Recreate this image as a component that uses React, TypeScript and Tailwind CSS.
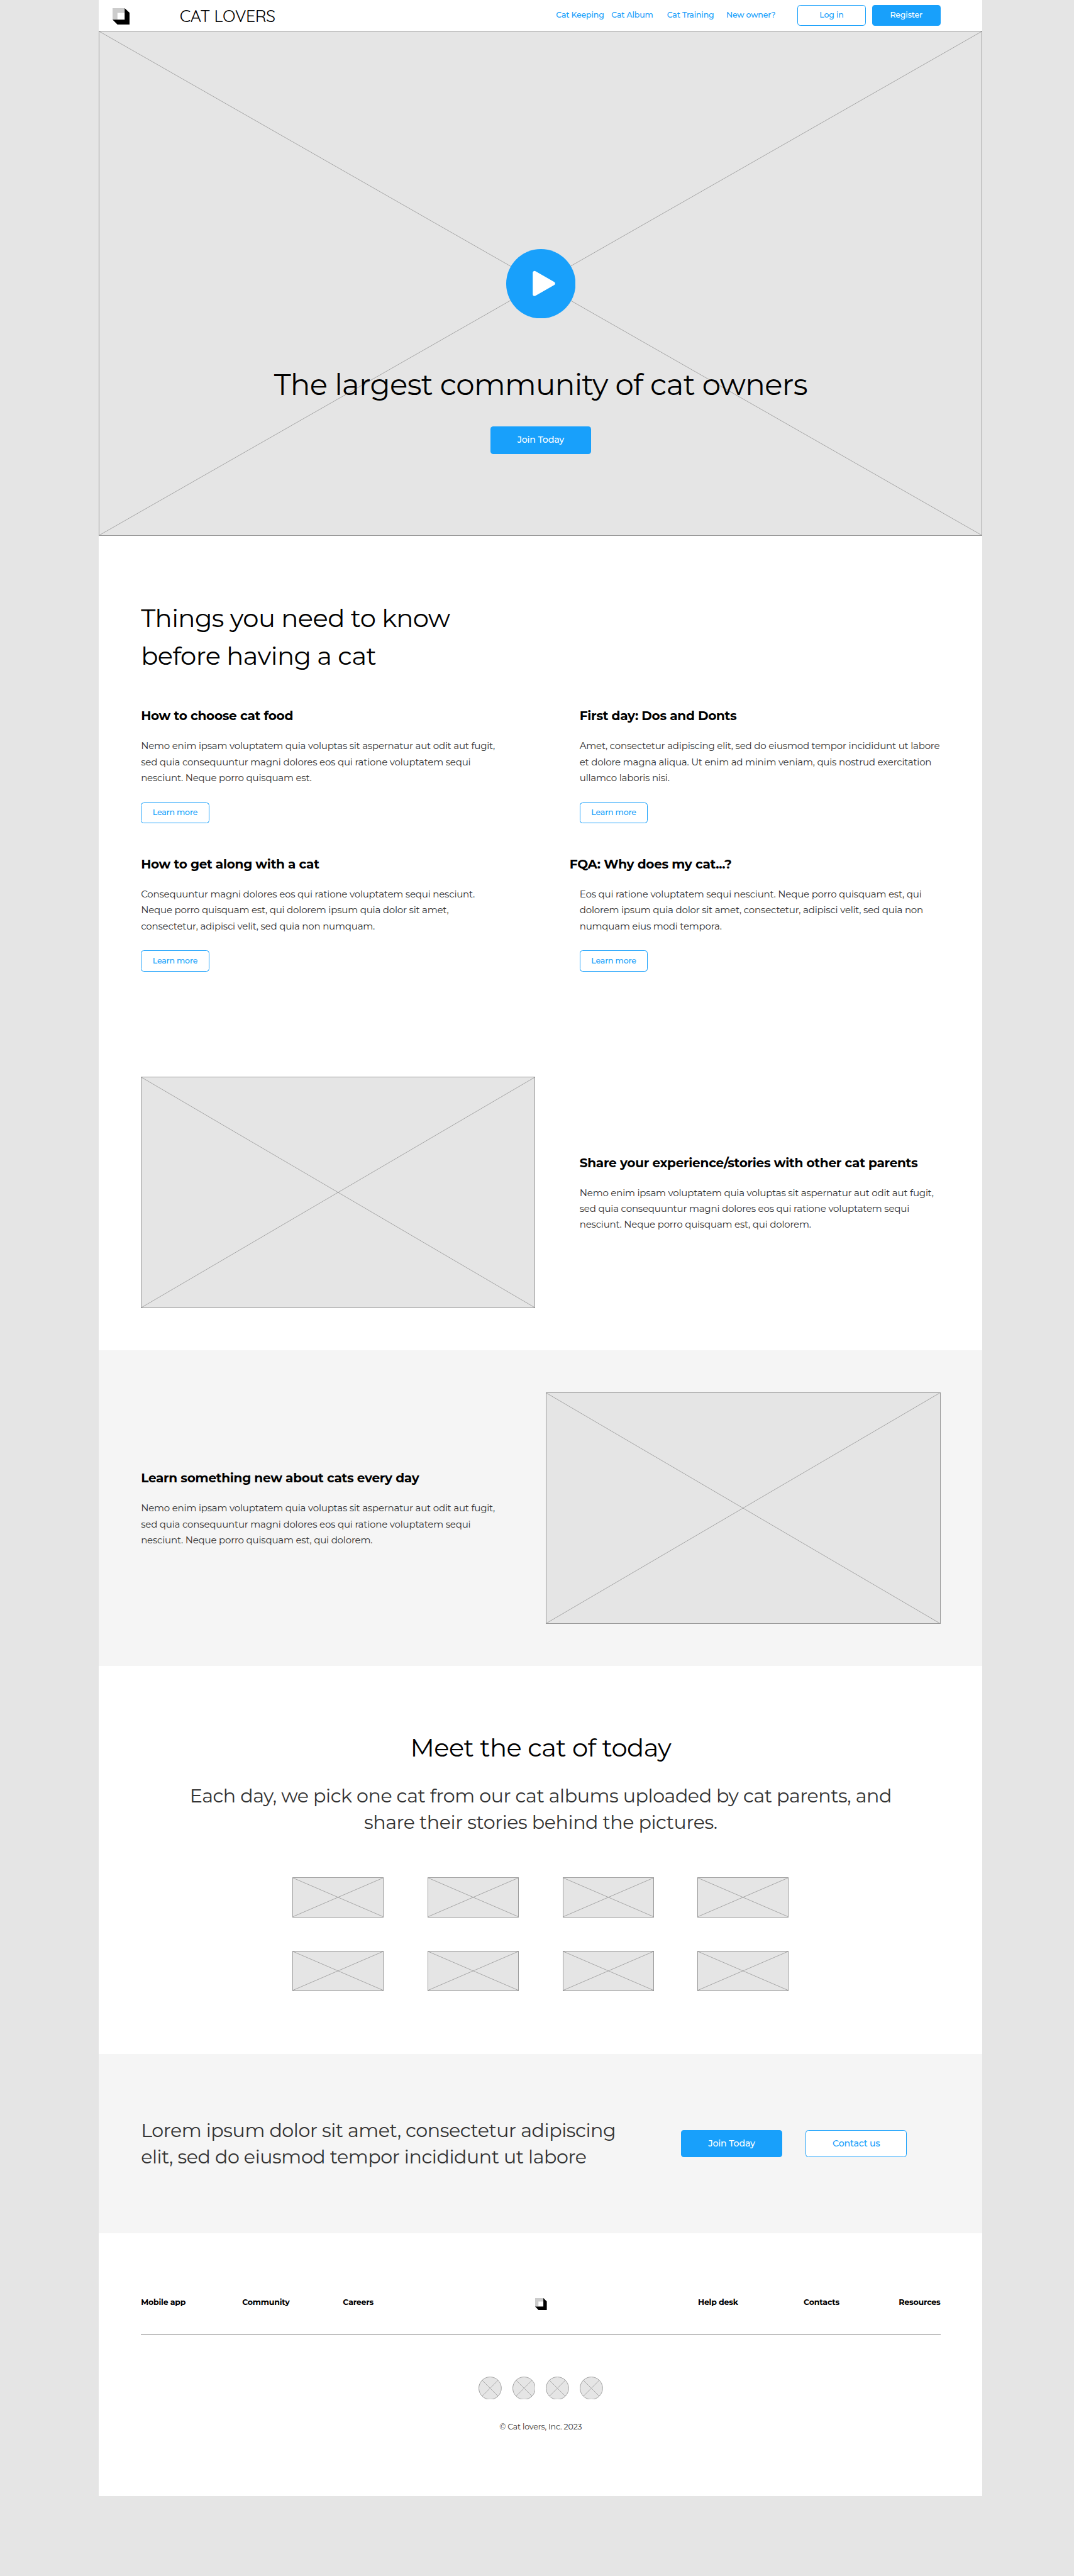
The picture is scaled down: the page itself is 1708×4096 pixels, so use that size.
import type { ReactNode } from "react";

function Logo({ className }: { className: string }) {
  return (
    <svg viewBox="0 0 98 93" preserveAspectRatio="none" className={className} aria-label="Cat Lovers logo">
      <path d="M0 0H69V66H0Z" fill="#cccccc" />
      <path d="M28 27H69V66H28Z" fill="#ffffff" />
      <path d="M69 0L98 27V93H28L0 66H69Z" fill="#000000" />
    </svg>
  );
}

function Cross() {
  return (
    <svg className="absolute inset-0 h-full w-full" preserveAspectRatio="none" aria-hidden="true">
      <line x1="0" y1="0" x2="100%" y2="100%" stroke="#a6a6a6" strokeWidth="1" />
      <line x1="100%" y1="0" x2="0" y2="100%" stroke="#a6a6a6" strokeWidth="1" />
    </svg>
  );
}

function Placeholder({ className }: { className: string }) {
  return (
    <div className={`relative shrink-0 border border-[#999999] bg-[#e5e5e5] ${className}`}>
      <Cross />
    </div>
  );
}

function Button({ filled, className, children }: { filled?: boolean; className: string; children: ReactNode }) {
  const tone = filled ? "bg-[#18a0fb] text-white" : "border border-[#18a0fb] bg-white text-[#18a0fb]";
  return (
    <button
      className={`flex shrink-0 items-center justify-center rounded-[4.5px] font-medium tracking-[-0.0142em] ${tone} ${className}`}
    >
      {children}
    </button>
  );
}

function Lines({ lines }: { lines: string[] }) {
  return (
    <>
      {lines.map((line) => (
        <span key={line} className="block whitespace-nowrap">
          {line}
        </span>
      ))}
    </>
  );
}

function TextBlock({ title, lines, titleClass = "" }: { title: string; lines: string[]; titleClass?: string }) {
  return (
    <>
      <h3
        className={`text-[20.07px] leading-[30.1px] font-bold tracking-[-0.0142em] whitespace-nowrap text-black ${titleClass}`}
      >
        {title}
      </h3>
      <p className="mt-5 text-[15.06px] leading-[25.09px] tracking-[-0.0142em] text-[#333333]">
        <Lines lines={lines} />
      </p>
    </>
  );
}

const articles = [
  {
    title: "How to choose cat food",
    lines: [
      "Nemo enim ipsam voluptatem quia voluptas sit aspernatur aut odit aut fugit,",
      "sed quia consequuntur magni dolores eos qui ratione voluptatem sequi",
      "nesciunt. Neque porro quisquam est.",
    ],
  },
  {
    title: "First day: Dos and Donts",
    lines: [
      "Amet, consectetur adipiscing elit, sed do eiusmod tempor incididunt ut labore",
      "et dolore magna aliqua. Ut enim ad minim veniam, quis nostrud exercitation",
      "ullamco laboris nisi.",
    ],
  },
  {
    title: "How to get along with a cat",
    lines: [
      "Consequuntur magni dolores eos qui ratione voluptatem sequi nesciunt.",
      "Neque porro quisquam est, qui dolorem ipsum quia dolor sit amet,",
      "consectetur, adipisci velit, sed quia non numquam.",
    ],
  },
  {
    title: "FQA: Why does my cat...?",
    titleClass: "-ml-4",
    lines: [
      "Eos qui ratione voluptatem sequi nesciunt. Neque porro quisquam est, qui",
      "dolorem ipsum quia dolor sit amet, consectetur, adipisci velit, sed quia non",
      "numquam eius modi tempora.",
    ],
  },
];

const storyLines = [
  "Nemo enim ipsam voluptatem quia voluptas sit aspernatur aut odit aut fugit,",
  "sed quia consequuntur magni dolores eos qui ratione voluptatem sequi",
  "nesciunt. Neque porro quisquam est, qui dolorem.",
];

export default function App() {
  return (
    <div className="h-[4096px] overflow-hidden bg-[#e5e5e5] pl-[157.25px] font-['Montserrat','Inter',sans-serif]">
      <div className="flex w-[1405.2px] flex-col bg-white">
        <header className="flex h-[49.35px] items-start pr-[66.9px] pl-[21.75px]">
          <Logo className="mt-[13.4px] h-[25.9px] w-[27.3px]" />
          <span className="mt-[5px] ml-[79.5px] font-['Quicksand','Montserrat',sans-serif] text-[26.77px] leading-[40px] tracking-[-0.02em] whitespace-nowrap text-black">
            CAT LOVERS
          </span>
          <nav className="mt-[7.5px] ml-auto flex h-[33.5px] items-center text-[12.55px] font-medium tracking-[-0.0142em] whitespace-nowrap text-[#18a0fb]">
            <a className="w-[88px]">Cat Keeping</a>
            <a className="w-[88.4px]">Cat Album</a>
            <a className="w-[94.2px]">Cat Training</a>
            <a className="w-[113.3px]">New owner?</a>
            <Button className="h-[33.5px] w-[108.7px]">Log in</Button>
            <Button filled className="ml-2.5 h-[33.5px] w-[108.7px]">
              Register
            </Button>
          </nav>
        </header>

        <section className="relative h-[803px] border border-[#999999] bg-[#e5e5e5]">
          <Cross />
          <div className="relative flex flex-col items-center pt-[345.3px]">
            <svg viewBox="0 0 132 132" className="size-[110.4px]" aria-label="Play">
              <circle cx="66" cy="66" r="66" fill="#18a0fb" />
              <path d="M54 45.2V85.8L89.5 65.5Z" fill="#ffffff" stroke="#ffffff" strokeWidth="7" strokeLinejoin="round" />
            </svg>
            <h1 className="mt-[75.8px] text-[46.84px] leading-[60.2px] tracking-[-0.0138em] whitespace-nowrap text-black">
              The largest community of cat owners
            </h1>
            <Button filled className="mt-[36.3px] h-[43.5px] w-[160.6px] text-[14.22px]">
              Join Today
            </Button>
          </div>
        </section>

        <section className="h-[1294.8px] px-[66.9px] pt-[100.4px]">
          <h2 className="text-[40.15px] leading-[60.22px] tracking-[-0.0145em] text-black">
            <Lines lines={["Things you need to know", "before having a cat"]} />
          </h2>
          <div className="mt-[50.2px] grid grid-cols-[697.6px_1fr] gap-y-[50.2px]">
            {articles.map((a) => (
              <article key={a.title}>
                <TextBlock title={a.title} lines={a.lines} titleClass={a.titleClass} />
                <Button className="mt-[26.8px] h-[33.5px] w-[108.7px] text-[12.55px]">Learn more</Button>
              </article>
            ))}
          </div>
          <div className="mt-[167.3px] flex items-center">
            <Placeholder className="h-[368px] w-[627.3px]" />
            <div className="ml-[70.3px]">
              <TextBlock title="Share your experience/stories with other cat parents" lines={storyLines} />
            </div>
          </div>
        </section>

        <section className="flex h-[501.9px] items-center justify-between bg-[#f5f5f5] px-[66.9px]">
          <div>
            <TextBlock title="Learn something new about cats every day" lines={storyLines} />
          </div>
          <Placeholder className="h-[368px] w-[627.3px]" />
        </section>

        <section className="flex h-[617.3px] flex-col items-center pt-[100.4px] text-center">
          <h2 className="text-[40.15px] leading-[60.22px] tracking-[-0.0145em] text-black">Meet the cat of today</h2>
          <p className="mt-[25.1px] text-[30.11px] leading-[41.82px] tracking-[-0.0142em] text-[#333333]">
            <Lines
              lines={[
                "Each day, we pick one cat from our cat albums uploaded by cat parents, and",
                "share their stories behind the pictures.",
              ]}
            />
          </p>
          <div className="mt-[66.9px] grid grid-cols-4 gap-x-[69.6px] gap-y-[53.5px]">
            {Array.from({ length: 8 }, (_, i) => (
              <Placeholder key={i} className="h-[63.6px] w-[145.1px]" />
            ))}
          </div>
        </section>

        <section className="flex h-[284.4px] items-center bg-[#f5f5f5] pr-[120.4px] pl-[66.9px]">
          <p className="text-[30.11px] leading-[41.82px] tracking-[-0.0142em] text-[#333333]">
            <Lines
              lines={[
                "Lorem ipsum dolor sit amet, consectetur adipiscing",
                "elit, sed do eiusmod tempor incididunt ut labore",
              ]}
            />
          </p>
          <Button filled className="ml-auto h-[43.5px] w-[160.6px] text-[14.22px]">
            Join Today
          </Button>
          <Button className="ml-[37.6px] h-[43.5px] w-[160.6px] text-[14.22px]">Contact us</Button>
        </section>

        <footer className="flex h-[418.6px] flex-col items-center px-[66.9px] pt-[100.4px] tracking-[-0.18px]">
          <div className="flex w-full items-start border-b border-[#808080] pb-[40.1px] text-[12.55px] leading-5 font-bold whitespace-nowrap text-black">
            <a className="w-[161px]">Mobile app</a>
            <a className="w-[160.2px]">Community</a>
            <a className="w-[306.1px]">Careers</a>
            <div className="h-5 w-[258.5px]">
              <Logo className="mt-[3.3px] h-[19px] w-[18.6px]" />
            </div>
            <a className="w-[168.1px]">Help desk</a>
            <a>Contacts</a>
            <a className="ml-auto">Resources</a>
          </div>
          <div className="mt-[66.4px] flex gap-[17px]">
            {Array.from({ length: 4 }, (_, i) => (
              <svg key={i} viewBox="0 0 44 44" className="size-[36.8px]" aria-hidden="true">
                <circle cx="22" cy="22" r="21.4" fill="#e5e5e5" />
                <path d="M6.9 6.9L37.1 37.1M37.1 6.9L6.9 37.1" stroke="#a6a6a6" strokeWidth="1.1" />
                <circle cx="22" cy="22" r="21.4" fill="none" stroke="#999999" strokeWidth="1.1" />
              </svg>
            ))}
          </div>
          <p className="mt-[33.5px] text-[12.55px] leading-5 text-[#333333]">© Cat lovers, Inc. 2023</p>
        </footer>
      </div>
    </div>
  );
}
